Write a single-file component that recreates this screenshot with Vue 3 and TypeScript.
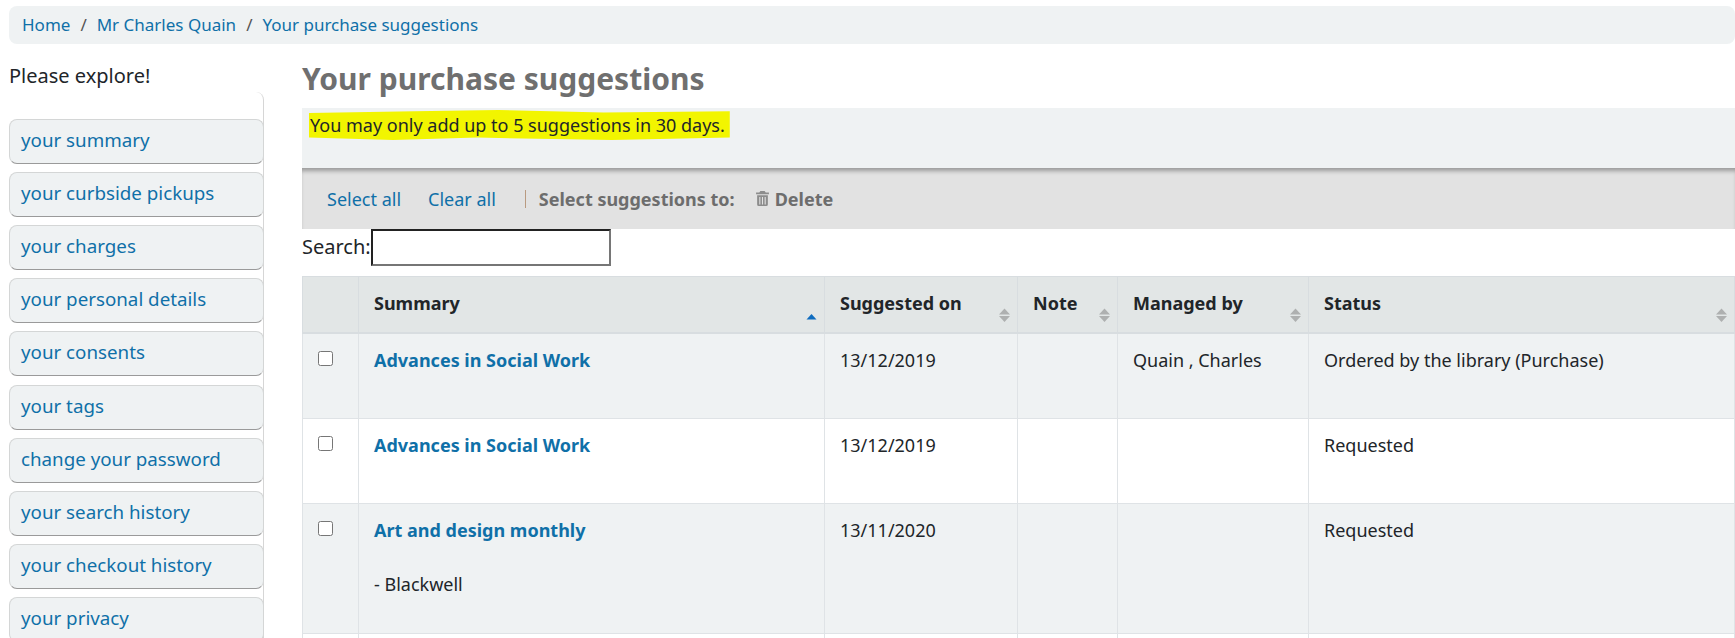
<script setup lang="ts">
const menu: string[] = ['your summary','your curbside pickups','your charges','your personal details','your consents','your tags','change your password','your search history','your checkout history','your privacy']
const crumbs: string[] = ['Home','Mr Charles Quain','Your purchase suggestions']
const cols = [
  { t: 'Summary', active: true },
  { t: 'Suggested on' },
  { t: 'Note' },
  { t: 'Managed by' },
  { t: 'Status' },
]
const rows = [
  { title: 'Advances in Social Work', sub: '', date: '13/12/2019', by: 'Quain , Charles', status: 'Ordered by the library (Purchase)' },
  { title: 'Advances in Social Work', sub: '', date: '13/12/2019', by: '', status: 'Requested' },
  { title: 'Art and design monthly', sub: '- Blackwell', date: '13/11/2020', by: '', status: 'Requested' },
  { title: '', sub: '', date: '', by: '', status: '' },
]
</script>

<template>
  <div class="page">
    <nav class="crumbs">
      <template v-for="(c, i) in crumbs" :key="c">
        <span v-if="i" class="sep">/</span>
        <a href="#">{{ c }}</a>
      </template>
    </nav>
    <div class="body">
      <aside class="side">
        <div class="explore">Please explore!</div>
        <ul class="menu">
          <li v-for="m in menu" :key="m"><a href="#">{{ m }}</a></li>
        </ul>
      </aside>
      <main class="main">
        <h1>Your purchase suggestions</h1>
        <div class="alert"><span class="mark">You may only add up to 5 suggestions in 30 days.</span></div>
        <div class="toolbar">
          <a href="#" class="tl first">Select all</a>
          <a href="#" class="tl">Clear all</a>
          <span class="pipe"></span>
          <b class="sel">Select suggestions to:</b>
          <span class="del">
            <svg width="13" height="15" viewBox="0 0 12 14"><path fill="#8c8c8c" d="M4 0h4l1 1.500h3v1.500H0V1.500h3zM1 4h10v8.500a1.500 1.500 0 0 1-1.500 1.500h-7A1.500 1.500 0 0 1 1 12.500z"/><path stroke="#e2e2e2" d="M3.500 5.500v7M6 5.500v7M8.500 5.500v7"/></svg>
            Delete
          </span>
        </div>
        <div class="search"><label>Search:</label><input type="text" /></div>
        <table>
          <colgroup>
            <col style="width:56px" /><col style="width:466px" /><col style="width:193px" /><col style="width:100px" /><col style="width:191px" /><col />
          </colgroup>
          <thead>
            <tr>
              <th></th>
              <th v-for="c in cols" :key="c.t">
                {{ c.t }}
                <svg class="sort" width="11" height="14" viewBox="0 0 11 14">
                  <path v-if="!c.active" d="M5.500 .5l5.500 6H0z" fill="#aeb0b0" />
                  <path v-if="!c.active" d="M0 8h11l-5.500 6z" fill="#aeb0b0" />
                  <path v-if="c.active" d="M5.500 6l5 5.500h-10z" fill="#0f6cbf" />
                </svg>
              </th>
            </tr>
          </thead>
          <tbody>
            <tr v-for="(r, i) in rows" :key="i" :class="{ odd: i % 2 === 0 }">
              <td class="chk"><span class="box"></span></td>
              <td>
                <a href="#" class="title">{{ r.title }}</a>
                <p v-if="r.sub" class="sub">{{ r.sub }}</p>
              </td>
              <td>{{ r.date }}</td>
              <td></td>
              <td>{{ r.by }}</td>
              <td>{{ r.status }}</td>
            </tr>
          </tbody>
        </table>
      </main>
    </div>
  </div>
</template>

<style>
html, body { margin: 0; background: #fff; overflow: hidden; }
</style>

<style scoped>
.page { width: 1735px; height: 638px; overflow: hidden; font-family: "Noto Sans", sans-serif; font-size: 18px; color: #212529; box-sizing: border-box; padding: 6px 0 0 9px; }
a { color: #0f70a8; text-decoration: none; }
.crumbs { height: 38px; background: #eff2f3; border-radius: 8px; display: flex; align-items: center; padding: 0 0 2px 13px; box-sizing: border-box; font-size: 17px; }
.sep { color: #555; margin: 0 10px; }
.body { display: flex; }
.side { width: 255px; flex: none; }
.explore { margin-top: 18px; height: 30px; font-size: 20px; line-height: 28px; }
.menu { list-style: none; margin: 0; padding: 27px 0 0; border-right: 1px solid #d6d6d6; border-top-right-radius: 8px; }
.menu li { height: 45px; box-sizing: border-box; margin-bottom: 8.120px; background: #eff2f3; border: 1px solid #d4d6d6; border-bottom-color: #9a9a9a; border-radius: 8px; padding-left: 11px; line-height: 40px; font-size: 18.750px; margin-right: -1px; }
.main { margin-left: 38px; flex: 1; min-width: 0; }
h1 { margin: 0; font-size: 30px; line-height: 40px; padding-top: 15px; height: 49px; color: #6f6f6f; font-weight: 700; box-sizing: content-box; }
.alert { height: 60px; box-sizing: border-box; background: #eff2f3; padding: 5px 7px; font-size: 18px; line-height: 24px; }
.mark { background: #f2f500; padding: 3px 5px 3px 1px; clip-path: polygon(0 10%, 25% 4%, 45% 0, 70% 8%, 100% 4%, 100% 92%, 72% 100%, 40% 92%, 20% 100%, 0 92%); }
.toolbar { height: 61px; background: #e2e2e2; box-shadow: inset 0 5px 4px -2px #9a9a9a; display: flex; align-items: center; font-size: 18px; color: #6d6d6d; }
.tl { margin-left: 27px; }
.tl.first { margin-left: 25px; }
.pipe { width: 1px; height: 18px; background: #b99a80; margin: 0 13px 0 29px; }
.sel { font-weight: 700; }
.del { font-weight: 700; margin-left: 21px; display: inline-flex; align-items: center; gap: 6px; color: #6d6d6d; }
.search { height: 47px; display: flex; align-items: flex-start; font-size: 20px; }
.search label { line-height: 36px; }
.search input { width: 240px; height: 37px; box-sizing: border-box; margin: 0; border: 2px solid; border-color: #222 #767676 #767676 #222; background: #fff; padding: 0; }
table { width: 100%; table-layout: fixed; border-collapse: collapse; font-size: 18px; }
th { position: relative; height: 56px; box-sizing: border-box; background: #e2e6e6; text-align: left; vertical-align: top; padding: 14px 15px; border: 1px solid #d8dde0; border-bottom: 2px solid #d8dde0; font-weight: 700; line-height: 24px; color: #212529; }
td { vertical-align: top; padding: 14px 15px; border: 1px solid #dfe3e6; line-height: 24px; height: 85.500px; box-sizing: border-box; }
tr.odd td { background: #eff2f3; }
.sort { position: absolute; right: 7px; bottom: 10px; }
.title { font-weight: 700; color: #0f70a8; }
.sub { margin: 30px 0 0; padding-bottom: 23px; }
.chk { padding-left: 15px; }
.box { display: block; width: 15px; height: 15px; box-sizing: border-box; border: 1px solid #767676; border-radius: 2.500px; background: #fff; margin-top: 3px; }
</style>
